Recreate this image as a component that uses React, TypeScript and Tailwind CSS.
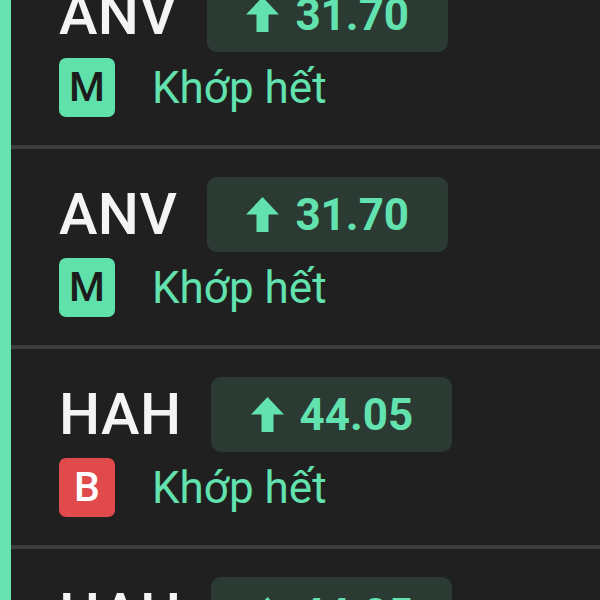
import React from "react";

type Row = { sym: string; price: string; side: "M" | "B" };

const rows: Row[] = [
  { sym: "ANV", price: "31.70", side: "M" },
  { sym: "ANV", price: "31.70", side: "M" },
  { sym: "HAH", price: "44.05", side: "B" },
  { sym: "HAH", price: "44.05", side: "B" },
];

function UpArrow() {
  return (
    <svg width="33" height="35" viewBox="0 0 33 35" className="shrink-0">
      <path d="M16.5 0 L33 17.5 L22.5 17.5 L22.5 35 L10.5 35 L10.5 17.5 L0 17.5 Z" fill="#62e2ae" />
    </svg>
  );
}

function OrderRow({ r }: { r: Row }) {
  return (
    <div className="flex flex-col">
      <div className="flex flex-col pt-[28px] pb-[28px] pl-[48px]">
        <div className="flex items-center h-[75px]">
          <span className="text-[58px] leading-[75px] font-medium text-[#f4f4f4] tracking-[0.4px]">{r.sym}</span>
          <div className="ml-[30px] flex items-center justify-center gap-[16px] h-[75px] w-[241px] rounded-[10px] bg-[#2b3a33]">
            <UpArrow />
            <span className="text-[44px] leading-none font-bold text-[#62e2ae]">{r.price}</span>
          </div>
        </div>
        <div className="flex items-center mt-[6px] h-[59px]">
          <div
            className={
              r.side === "M"
                ? "flex items-center justify-center w-[56px] h-[59px] rounded-[7px] bg-[#60e0aa] text-[#1c1c1c] text-[41px] font-medium leading-none"
                : "flex items-center justify-center w-[56px] h-[59px] rounded-[7px] bg-[#e14a4c] text-[#ffffff] text-[41px] font-medium leading-none"
            }
          >
            {r.side}
          </div>
          <span className="ml-[37px] text-[44px] leading-none text-[#62e2ae] font-normal">Khớp hết</span>
        </div>
      </div>
      <div className="h-[4px] bg-[#3c3c3c]" />
    </div>
  );
}

export default function App() {
  return (
    <div
      className="w-[600px] h-[600px] overflow-hidden flex bg-[#202020]"
      style={{ fontFamily: "Roboto, 'Noto Sans', sans-serif" }}
    >
      <div className="w-[11px] shrink-0 bg-[#66e2b3]" />
      <div className="flex-1 flex flex-col -mt-[51px]">
        {rows.map((r, i) => (
          <OrderRow key={i} r={r} />
        ))}
      </div>
    </div>
  );
}
